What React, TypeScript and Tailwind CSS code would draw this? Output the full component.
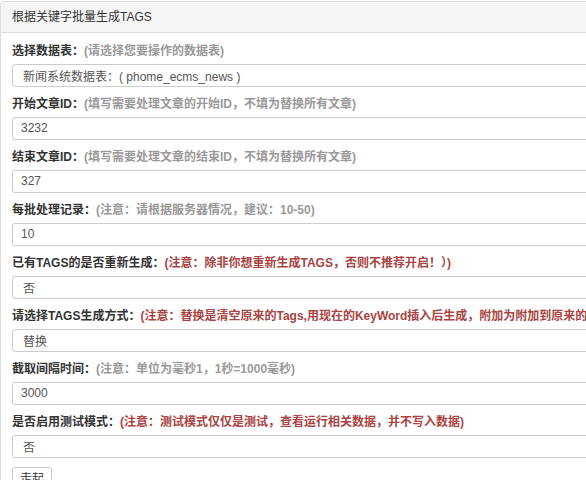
const fields: {
  label: string;
  note: string;
  tone: "grey" | "red";
  value: string;
  kind: "input" | "select";
}[] = [
  { label: "选择数据表：", note: "(请选择您要操作的数据表)", tone: "grey", value: "新闻系统数据表：( phome_ecms_news )", kind: "select" },
  { label: "开始文章ID：", note: "(填写需要处理文章的开始ID，不填为替换所有文章)", tone: "grey", value: "3232", kind: "input" },
  { label: "结束文章ID：", note: "(填写需要处理文章的结束ID，不填为替换所有文章)", tone: "grey", value: "327", kind: "input" },
  { label: "每批处理记录：", note: "(注意：请根据服务器情况，建议：10-50)", tone: "grey", value: "10", kind: "input" },
  { label: "已有TAGS的是否重新生成：", note: "(注意：除非你想重新生成TAGS，否则不推荐开启！）)", tone: "red", value: "否", kind: "select" },
  { label: "请选择TAGS生成方式：", note: "(注意：替换是清空原来的Tags,用现在的KeyWord插入后生成，附加为附加到原来的Tags后面)", tone: "red", value: "替换", kind: "select" },
  { label: "截取间隔时间：", note: "(注意：单位为毫秒1，1秒=1000毫秒)", tone: "grey", value: "3000", kind: "input" },
  { label: "是否启用测试模式：", note: "(注意：测试模式仅仅是测试，查看运行相关数据，并不写入数据)", tone: "red", value: "否", kind: "select" },
];

export default function App() {
  return (
    <div
      className="w-[586px] h-[480px] overflow-hidden bg-white pt-px"
      style={{ fontFamily: '"Liberation Sans", "Noto Sans CJK SC", sans-serif' }}
    >
      <div className="w-[720px] border border-[#ddd] rounded-[3px] text-[12px] text-[#333]">
        <div className="bg-[#f5f5f5] border-b border-[#ddd] px-[11px] py-[7px] leading-[16px]">
          根据关键字批量生成TAGS
        </div>
        <div className="px-[11px] pt-[10px] pb-4">
          {fields.map((f) => (
            <div key={f.label} className="mb-[9px]">
              <div className="font-bold leading-[17px] mb-[4px] whitespace-nowrap">
                {f.label}
                <span className={f.tone === "red" ? "text-[#a94442]" : "text-[#999]"}>{f.note}</span>
              </div>
              {f.kind === "input" ? (
                <div className="h-[23px] w-[680px] border border-[#ccc] rounded-[3px] pl-[8px] leading-[21px] text-[#555]">
                  {f.value}
                </div>
              ) : (
                <div className="h-[23px] w-[680px] border border-[#ccc] rounded-[3px] pl-[10px] pt-[2px] leading-[21px] text-[#555] overflow-hidden whitespace-nowrap">
                  {f.value}
                </div>
              )}
            </div>
          ))}
          <button className="h-[24px] w-[40px] border border-[#ccc] rounded-[3px] bg-white text-[12px] text-[#333] leading-[22px]">
            走起
          </button>
        </div>
      </div>
    </div>
  );
}
